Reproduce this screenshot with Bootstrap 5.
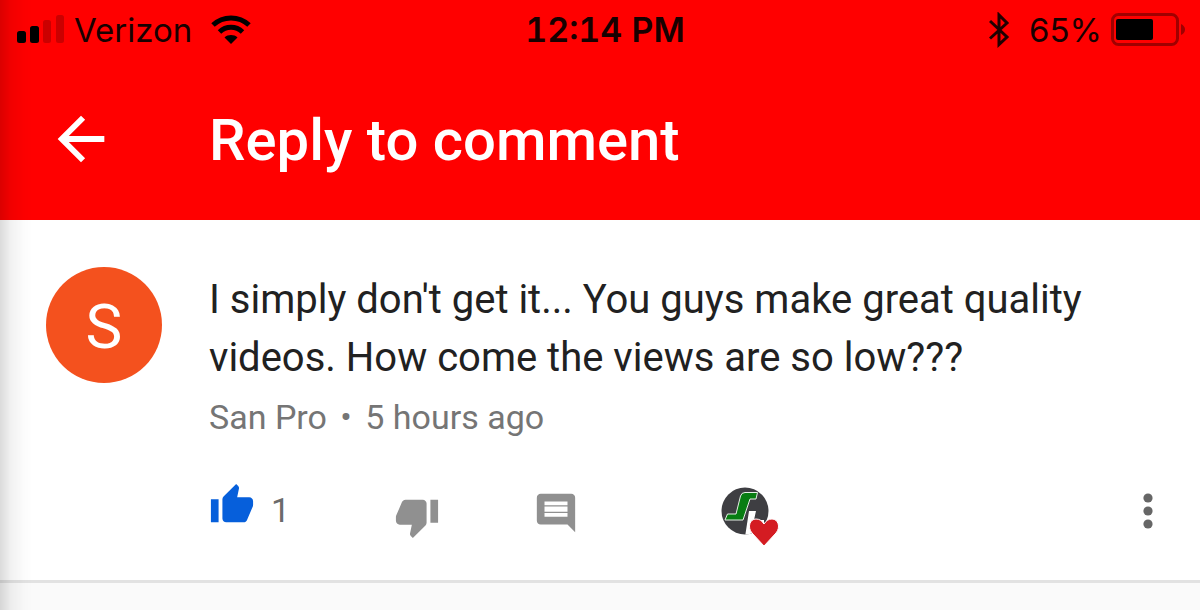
<!DOCTYPE html>
<html lang="en">
<head>
<meta charset="utf-8">
<meta name="viewport" content="width=device-width, initial-scale=1">
<title>Reply to comment</title>
<link href="https://cdn.jsdelivr.net/npm/bootstrap@5.3.0/dist/css/bootstrap.min.css" rel="stylesheet">
<style>
  body { font-family: Roboto, "Noto Sans", sans-serif; background: #fafafa; color: #212121; }
  svg { display: block; flex: none; }
  button { border: 0; background: none; padding: 0; color: inherit; }
  .edge-shade { position: fixed; inset: 0 auto 0 0; width: 32px; pointer-events: none; z-index: 5;
    background: linear-gradient(90deg, rgba(0,0,0,.14), rgba(0,0,0,.05) 35%, rgba(0,0,0,.01) 75%, transparent); }
  .app-top { background: #f00; }
  .status-bar { height: 60px; padding: 0 14px 0 16px; font: 400 33px/60px Inter, "Liberation Sans", sans-serif; color: #180000; }
  .status-side { flex: 1 1 0; }
  .clock { font-size: 34px; font-weight: 600; font-variant-numeric: tabular-nums; padding-left: 8px; }
  .title-bar { height: 160px; color: #fff; }
  .lead-col { width: 209px; flex: none; padding-left: 46px; }
  .page-title { font-size: 58px; line-height: 64px; font-weight: 500; }
  .comment-box { background: #fff; border-bottom: 3px solid #e2e2e2; padding: 47px 0 28px; }
  .avatar { width: 116px; height: 116px; background: #f4511e; color: #fff; font-size: 62px; line-height: 120px; }
  .comment-text { font-size: 40px; line-height: 58px; padding-top: 4px; }
  .meta { font-size: 34px; line-height: 60px; color: #757575; }
  .dot-sep { margin: 0 5px; }
  .actions { height: 70px; margin-top: 35px; }
  .vote-up { width: 184px; color: #065fdb; }
  .vote-up span { font-size: 34px; line-height: 48px; color: #6b6b6b; }
  .vote-down { width: 140px; color: #909090; padding-top: 12px; }
  .reply { width: 187px; color: #909090; }
  .more { width: 48px; margin-right: 28px; color: #666; }
</style>
</head>
<body>
<div class="edge-shade"></div>
<header class="app-top">
  <div class="status-bar d-flex align-items-center">
    <div class="status-side d-flex align-items-center">
      <svg width="50" height="32" viewBox="0 0 50 32" aria-hidden="true">
        <rect x="1" y="17" width="9" height="12" rx="2.5"/><rect x="14" y="12" width="9" height="17" rx="2.5"/>
        <g opacity=".2"><rect x="27" y="6" width="8" height="23" rx="2.5"/><rect x="40" y="1" width="8" height="28" rx="2.5"/></g>
      </svg>
      <span class="ms-2">Verizon</span>
      <svg class="ms-3" width="44" height="32" viewBox="0 0 44 32" fill="none" stroke="#000" stroke-width="5" aria-hidden="true">
        <path d="M5 11C15 1.500 31 1.500 41 11M11.500 18C18 11.800 28 11.800 34.500 18"/>
        <path d="M16.500 23.500C20 20.300 26 20.300 29.500 23.500L23 30Z" fill="#000" stroke="none"/>
      </svg>
    </div>
    <div class="clock">12:14 PM</div>
    <div class="status-side d-flex align-items-center justify-content-end">
      <svg width="24" height="36" viewBox="0 0 24 36" fill="none" stroke="#200000" stroke-width="3" aria-hidden="true"><path d="M1 9L18 25L10 32.500V3L18 11L1 26.500"/></svg>
      <span class="ms-3 me-2">65%</span>
      <svg width="76" height="36" viewBox="0 0 76 36" aria-hidden="true">
        <rect x="2.500" y="2.500" width="65" height="30" rx="6" fill="none" stroke="#a00000" stroke-width="3"/>
        <rect x="6" y="7" width="37" height="21" rx="2"/><path d="M71 12Q75 14 75 17.500Q75 21 71 23Z" fill="#a00000"/>
      </svg>
    </div>
  </div>
  <div class="title-bar d-flex align-items-center">
    <div class="lead-col pt-1">
      <button type="button" aria-label="Back">
        <svg width="70" height="70" viewBox="0 0 24 24" fill="currentColor"><path d="M20 11H7.830l5.590-5.590L12 4l-8 8 8 8 1.410-1.410L7.830 13H20v-2z"/></svg>
      </button>
    </div>
    <h1 class="page-title m-0">Reply to comment</h1>
  </div>
</header>
<main>
  <article class="comment-box d-flex">
    <div class="lead-col"><div class="avatar rounded-circle text-center">S</div></div>
    <div class="flex-grow-1">
      <p class="comment-text m-0 pe-5">I simply don't get it... You guys make great quality videos. How come the views are so low???</p>
      <div class="meta">San Pro <span class="dot-sep">•</span> 5 hours ago</div>
      <div class="actions d-flex align-items-start">
        <button type="button" class="vote-up d-flex" aria-label="Like, 1">
          <svg width="46" height="46" viewBox="0 0 24 24" fill="currentColor"><path d="M1 21h4V9H1v12zm22-11c0-1.100-.9-2-2-2h-6.310l.95-4.570.03-.32c0-.41-.17-.79-.44-1.060L14.170 1 7.590 7.590C7.220 7.950 7 8.450 7 9v10c0 1.100.9 2 2 2h9c.83 0 1.540-.5 1.840-1.220l3.020-7.050c.09-.23.14-.47.14-.73v-2z"/></svg>
          <span class="ms-3 pt-1">1</span>
        </button>
        <button type="button" class="vote-down" aria-label="Dislike">
          <svg width="48" height="46" viewBox="0 0 24 24" fill="currentColor"><path d="M15 3H6c-.83 0-1.540.5-1.840 1.220l-3.020 7.050c-.09.23-.14.47-.14.73v2c0 1.100.9 2 2 2h6.310l-.95 4.570-.03.32c0 .41.17.79.44 1.060L9.830 23l6.590-6.590c.36-.36.58-.86.58-1.410V5c0-1.100-.9-2-2-2zm4 0v12h4V3h-4z"/></svg>
        </button>
        <button type="button" class="reply pt-2" aria-label="Reply">
          <svg width="46" height="46" viewBox="0 0 24 24" fill="currentColor"><path d="M21.990 4c0-1.100-.89-2-1.990-2H4c-1.100 0-2 .9-2 2v12c0 1.100.9 2 2 2h14l4 4-.01-18zM18 14H6v-2h12v2zm0-2.600H6V8.600h12v2.800zm0-3.400H6V6h12v2z"/></svg>
        </button>
        <button type="button" aria-label="Loved by creator">
          <svg width="60" height="66" viewBox="0 0 60 66">
            <defs><clipPath id="disc"><circle cx="25" cy="29" r="23.500"/></clipPath></defs>
            <circle cx="25" cy="29" r="23.500" fill="#3e3e42"/>
            <g clip-path="url(#disc)">
              <path d="M29 29H36L34 38H44V55H25Z" fill="#fff"/>
              <path d="M37.500 10.500L36 17H30L23 38H5L7.500 32H16L20.500 14Q21.500 10.500 25 10.500Z" fill="#087d12" stroke="#e6efe6" stroke-width="1"/>
            </g>
            <path d="M44 64L32 51C27 45 30 37 36 37C40 37 42 39 44 42C46 39 48 37 52 37C58 37 61 45 56 51Z" fill="#d41c22" stroke="#fff" stroke-width="1"/>
          </svg>
        </button>
        <button type="button" class="more ms-auto" aria-label="More options">
          <svg width="48" height="58" viewBox="0 0 48 58" fill="currentColor"><circle cx="24" cy="16" r="4.600"/><circle cx="24" cy="29" r="4.600"/><circle cx="24" cy="42" r="4.600"/></svg>
        </button>
      </div>
    </div>
  </article>
</main>
<script src="https://cdn.jsdelivr.net/npm/bootstrap@5.3.0/dist/js/bootstrap.bundle.min.js"></script>
</body>
</html>
